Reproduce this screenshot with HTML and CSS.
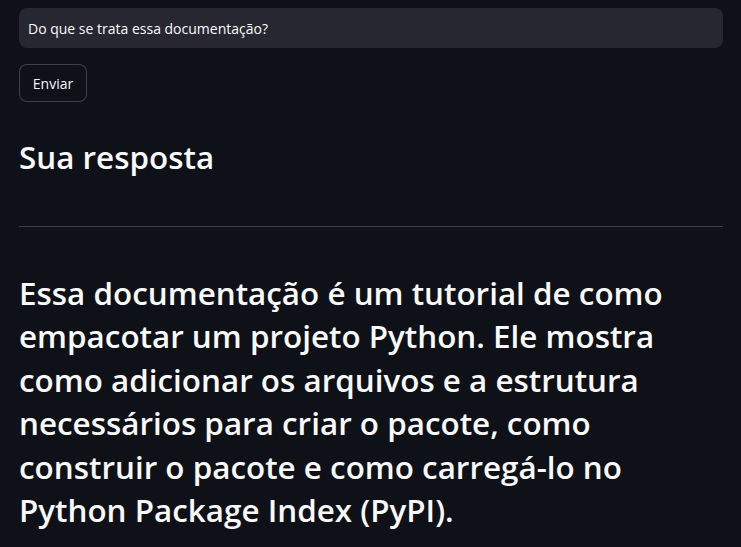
FILE: index.html
```html
<!DOCTYPE html>
<html lang="pt">
<head>
<meta charset="utf-8">
<link rel="stylesheet" href="styles.css">
</head>
<body>
<main class="app">
  <div class="input">Do que se trata essa documentação?</div>
  <button class="btn">Enviar</button>
  <h3 class="title">Sua resposta</h3>
  <hr class="rule">
  <p class="answer">Essa documentação é um tutorial de como empacotar um projeto Python. Ele mostra como adicionar os arquivos e a estrutura necessários para criar o pacote, como construir o pacote e como carregá-lo no Python Package Index (PyPI).</p>
</main>
</body>
</html>
```
FILE: styles.css
```css
html, body {
  margin: 0;
  background: #0e1117;
  color: #fafafa;
  font-family: "Open Sans", "Liberation Sans", sans-serif;
}
.app {
  padding: 8px 18px 0 19px;
  display: flex;
  flex-direction: column;
  align-items: flex-start;
}
.input {
  align-self: stretch;
  height: 40px;
  box-sizing: border-box;
  background: #262730;
  border-radius: 8px;
  padding: 0 9px;
  display: flex;
  align-items: center;
  font-size: 14px;
}
.btn {
  margin-top: 16px;
  height: 38px;
  width: 68px;
  background: #0e1117;
  color: #fafafa;
  border: 1px solid rgba(250, 250, 250, 0.2);
  border-radius: 8px;
  font-family: inherit;
  font-size: 14px;
  padding: 0;
}
.title {
  margin: 35px 0 0;
  font-size: 31.4px;
  font-weight: 600;
  line-height: 40px;
}
.rule {
  align-self: stretch;
  margin: 49px 0 0;
  border: 0;
  border-top: 1px solid rgba(250, 250, 250, 0.2);
}
.answer {
  max-width: 665px;
  margin: 44px 0 0;
  font-size: 31.4px;
  font-weight: 600;
  line-height: 43.4px;
}
```
